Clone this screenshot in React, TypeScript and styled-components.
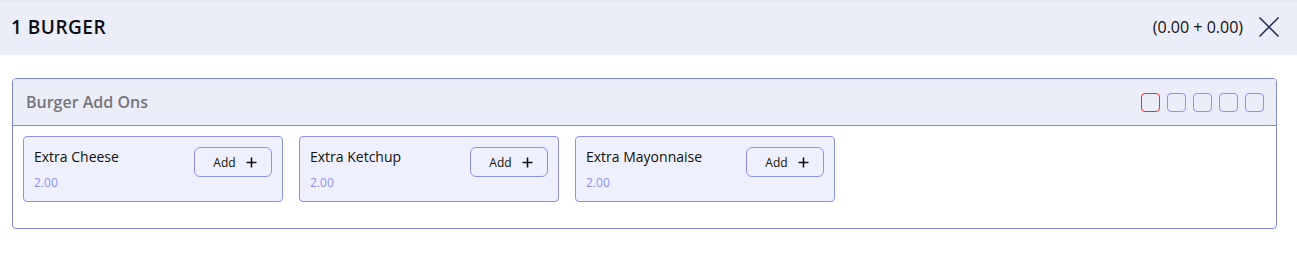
import React from "react";
import styled, { createGlobalStyle } from "styled-components";

const Global = createGlobalStyle`
  html, body { margin: 0; padding: 0; background: #ffffff; }
  body { font-family: "Open Sans", "Noto Sans", sans-serif; color: #111; }
  * { box-sizing: border-box; }
`;

const Page = styled.div`
  width: 1297px;
`;

const TopBar = styled.header`
  height: 55px;
  background: #ebedf9;
  border-top: 2px solid #e6e8f4;
  display: flex;
  align-items: center;
  justify-content: space-between;
  padding: 0 17px 4px 11px;
`;

const Title = styled.h1`
  margin: 0;
  font-size: 19px;
  font-weight: 600;
  letter-spacing: 0.5px;
  color: #0d0d14;
`;

const Right = styled.div`
  display: flex;
  align-items: center;
  gap: 15px;
`;

const Totals = styled.span`
  font-size: 16px;
  color: #111;
`;

const CloseBtn = styled.button`
  border: 0;
  background: transparent;
  padding: 0;
  width: 22px;
  height: 22px;
  display: flex;
  cursor: pointer;
`;

const Body = styled.div`
  padding: 23px 20px 0 12px;
`;

const Group = styled.section`
  border: 1px solid #8088e0;
  border-radius: 4px;
  overflow: hidden;
`;

const GroupHead = styled.div`
  height: 47px;
  background: #ebedf9;
  border-bottom: 1px solid #8088e0;
  display: flex;
  align-items: center;
  justify-content: space-between;
  padding: 0 12px 0 13px;
`;

const GroupTitle = styled.h2`
  margin: 0;
  font-size: 16px;
  font-weight: 600;
  color: #76767a;
`;

const Boxes = styled.div`
  display: flex;
  gap: 7px;
`;

const Box = styled.span<{ $red?: boolean }>`
  width: 19px;
  height: 19px;
  border-radius: 4px;
  border: 1px solid ${(p) => (p.$red ? "#e5332e" : "#8c93f0")};
  background: transparent;
`;

const Items = styled.div`
  display: flex;
  gap: 16px;
  padding: 10px 10px 26px 10px;
`;

const Item = styled.div`
  width: 260px;
  height: 66px;
  background: #eff0fd;
  border: 1px solid #8b91eb;
  border-radius: 4px;
  display: flex;
  justify-content: space-between;
  padding: 10px 10px 0 10px;
`;

const Info = styled.div`
  display: flex;
  flex-direction: column;
`;

const Name = styled.span`
  font-size: 14px;
  line-height: 20px;
  color: #111;
`;

const Price = styled.span`
  font-size: 12px;
  line-height: 16px;
  margin-top: 8px;
  color: #8f92ee;
`;

const AddBtn = styled.button`
  width: 78px;
  height: 30px;
  background: transparent;
  border: 1px solid #8b91eb;
  border-radius: 6px;
  display: flex;
  align-items: center;
  justify-content: center;
  gap: 10px;
  font-family: inherit;
  font-size: 12px;
  color: #111;
  padding: 0 0 0 4px;
  cursor: pointer;
`;

const PlusIcon = () => (
  <svg width="11" height="11" viewBox="0 0 11 11">
    <path d="M5.5 0.5v10M0.5 5.5h10" stroke="#111" strokeWidth="1.6" />
  </svg>
);

const XIcon = () => (
  <svg width="22" height="22" viewBox="0 0 22 22">
    <path d="M1.5 1.5L20.5 20.5M20.5 1.5L1.5 20.5" stroke="#1c2a4f" strokeWidth="1.5" />
  </svg>
);

const addons = [
  { name: "Extra Cheese", price: "2.00" },
  { name: "Extra Ketchup", price: "2.00" },
  { name: "Extra Mayonnaise", price: "2.00" },
];

export default function App() {
  return (
    <Page>
      <Global />
      <TopBar>
        <Title>1 BURGER</Title>
        <Right>
          <Totals>(0.00 + 0.00)</Totals>
          <CloseBtn aria-label="Close">
            <XIcon />
          </CloseBtn>
        </Right>
      </TopBar>
      <Body>
        <Group>
          <GroupHead>
            <GroupTitle>Burger Add Ons</GroupTitle>
            <Boxes>
              {[0, 1, 2, 3, 4].map((i) => (
                <Box key={i} $red={i === 0} />
              ))}
            </Boxes>
          </GroupHead>
          <Items>
            {addons.map((a) => (
              <Item key={a.name}>
                <Info>
                  <Name>{a.name}</Name>
                  <Price>{a.price}</Price>
                </Info>
                <AddBtn>
                  Add <PlusIcon />
                </AddBtn>
              </Item>
            ))}
          </Items>
        </Group>
      </Body>
    </Page>
  );
}
